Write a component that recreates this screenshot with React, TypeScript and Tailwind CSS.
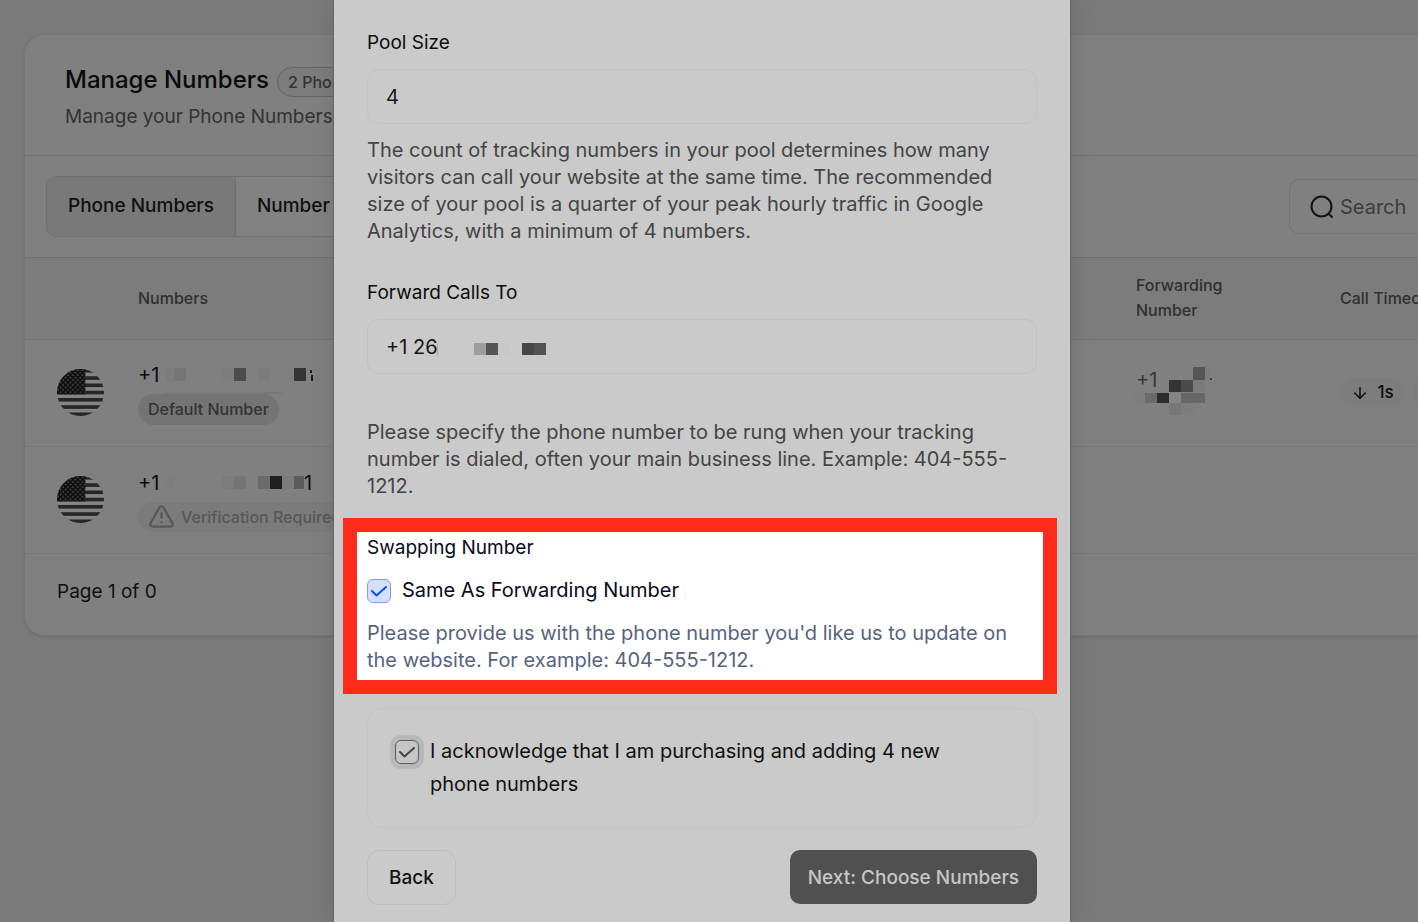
import { useState } from "react";
import { ArrowDown, TriangleAlert } from "lucide-react";

type Cell = [x: number, y: number, w: number, h: number, color: string];

interface MosaicProps {
  width: number;
  height: number;
  cells: Cell[];
  className?: string;
}

const FIRST_NUMBER: Cell[] = [
  [0, 0, 8, 13, "#7c7c7c"],
  [8, 0, 12, 13, "#767676"],
  [56, 0, 12, 13, "#7d7d7d"],
  [68, 0, 12, 13, "#4c4c4c"],
  [92, 0, 12, 13, "#7c7c7c"],
  [128, 0, 12, 13, "#353535"],
  [144, 2, 2, 3, "#1c1c1c"],
  [145, 7, 2, 6, "#1c1c1c"],
  [0, 24, 116, 2, "#797979"],
];

const SECOND_NUMBER: Cell[] = [
  [0, 0, 8, 13, "#7e7e7e"],
  [56, 0, 12, 13, "#7c7c7c"],
  [68, 0, 12, 13, "#757575"],
  [92, 0, 12, 13, "#6b6b6b"],
  [104, 0, 12, 13, "#202020"],
  [116, 0, 12, 13, "#7c7c7c"],
  [128, 0, 10, 13, "#5b5b5b"],
];

const FORWARDING: Cell[] = [
  [60, 0, 12, 13, "#555555"],
  [72, 0, 5, 13, "#7c7c7c"],
  [36, 13, 12, 12, "#343434"],
  [48, 13, 12, 12, "#4b4b4b"],
  [60, 13, 12, 12, "#7b7b7b"],
  [0, 26, 12, 10, "#7e7e7e"],
  [12, 26, 12, 10, "#6a6a6a"],
  [24, 26, 12, 10, "#2d2d2d"],
  [36, 26, 12, 10, "#858585"],
  [48, 26, 12, 10, "#676767"],
  [60, 26, 12, 10, "#676767"],
  [36, 36, 12, 12, "#777777"],
  [48, 36, 12, 12, "#7d7d7d"],
  [77, 11, 2, 2, "#444444"],
];

const FORWARD_CALLS: Cell[] = [
  [0, 0, 1, 12, "#a8a8a8"],
  [37, 0, 12, 12, "#9d9d9d"],
  [49, 0, 12, 12, "#565656"],
  [61, 0, 12, 12, "#c8c8c8"],
  [85, 0, 12, 12, "#474747"],
  [97, 0, 12, 12, "#525252"],
];

function Mosaic({ width, height, cells, className }: MosaicProps) {
  return (
    <svg
      width={width}
      height={height}
      className={className}
      shapeRendering="crispEdges"
      aria-hidden="true"
    >
      {cells.map(([x, y, w, h, color]) => (
        <rect key={`${x}-${y}`} x={x} y={y} width={w} height={h} fill={color} />
      ))}
    </svg>
  );
}

function Flag() {
  return (
    <svg width="47" height="47" viewBox="0 0 48 48" className="block" aria-label="US">
      <defs>
        <clipPath id="flag-circle">
          <circle cx="24" cy="24" r="24" />
        </clipPath>
        <pattern id="flag-stars" width="5" height="5" patternUnits="userSpaceOnUse">
          <rect width="5" height="5" fill="#101010" />
          <circle cx="1.2" cy="1.2" r="0.8" fill="#6a6a6a" />
          <circle cx="3.7" cy="3.7" r="0.8" fill="#6a6a6a" />
        </pattern>
      </defs>
      <g clipPath="url(#flag-circle)">
        <rect width="48" height="48" fill="#858585" />
        {[0, 1, 2, 3, 4, 5, 6].map((i) => (
          <rect key={i} y={i * 7.4} width="48" height="3.7" fill="#262626" />
        ))}
        <rect width="29" height="26" fill="url(#flag-stars)" />
      </g>
    </svg>
  );
}

interface CheckProps {
  id: string;
  checked: boolean;
  onChange: (checked: boolean) => void;
  boxClass: string;
  markClass: string;
}

function Check({ id, checked, onChange, boxClass, markClass }: CheckProps) {
  return (
    <span className="relative block size-6 shrink-0">
      <input
        id={id}
        type="checkbox"
        checked={checked}
        onChange={(e) => onChange(e.target.checked)}
        className={`block size-6 appearance-none rounded-md border ${boxClass}`}
      />
      {checked && (
        <svg
          viewBox="0 0 24 24"
          className={`pointer-events-none absolute inset-0 size-6 ${markClass}`}
          fill="none"
          strokeWidth="2"
          strokeLinecap="round"
          strokeLinejoin="round"
        >
          <path d="M5 12 9.5 16.5 19 8" />
        </svg>
      )}
    </span>
  );
}

function NumbersPage() {
  return (
    <div className="ml-6 rounded-l-[20px] border border-r-0 border-[#767676] bg-[#808080] shadow-sm">
      <div className="border-b border-[#747474] px-10 pt-7 pb-6">
        <div className="flex items-center gap-2">
          <h1 className="text-2xl leading-8 font-medium text-[#0a0a0a]">Manage Numbers</h1>
          <span className="mt-1 rounded-full border border-[#666666] bg-[#7c7c7c] px-2.5 text-base leading-7 font-medium whitespace-nowrap text-[#333333]">
            2 Phone Numbers
          </span>
        </div>
        <p className="mt-1.5 text-[19px] leading-7 text-[#333333]">Manage your Phone Numbers</p>
      </div>

      <div className="flex items-center justify-between border-b border-[#707070] py-5 pl-[21px]">
        <div className="flex overflow-hidden rounded-[10px] border border-[#707070] text-[19px] font-medium text-[#101010]">
          <button className="h-[59px] border-r border-[#707070] bg-[#797979] px-[21px]">
            Phone Numbers
          </button>
          <button className="h-[59px] w-44 bg-[#828282] px-[21px] text-left">Number</button>
        </div>
        <label className="flex h-[55px] w-[129px] items-center gap-1.5 overflow-hidden rounded-l-[10px] border border-r-0 border-[#757575] pl-5">
          <svg
            width="24"
            height="24"
            viewBox="0 0 24 24"
            className="shrink-0"
            fill="none"
            stroke="#141414"
            strokeWidth="2"
            strokeLinecap="round"
          >
            <circle cx="11.5" cy="11.5" r="10" />
            <path d="m19 19 3 3" />
          </svg>
          <input
            type="search"
            placeholder="Search"
            aria-label="Search"
            className="w-40 shrink-0 bg-transparent text-xl outline-none placeholder:text-[#3c3c3c]"
          />
        </label>
      </div>

      <table className="w-full table-fixed text-left">
        <thead>
          <tr className="h-[81px] border-b border-[#737373] bg-[#7c7c7c] text-base leading-[25px] text-[#303030]">
            <th className="w-[89px]" aria-label="Country" />
            <th className="pl-6 font-medium">Numbers</th>
            <th className="w-[204px] pr-12 pl-6 font-medium">Forwarding Number</th>
            <th className="w-[102px] pl-6 font-medium whitespace-nowrap">Call Timeout</th>
          </tr>
        </thead>
        <tbody>
          <tr className="h-[107px] border-b border-[#777777]">
            <td className="pl-8">
              <Flag />
            </td>
            <td className="pl-6">
              <div className="flex h-[33px] items-start gap-1 text-xl leading-7 text-[#0c0c0c]">
                <span className="w-6">+1</span>
                <Mosaic width={150} height={26} cells={FIRST_NUMBER} className="mt-[7px]" />
              </div>
              <span className="inline-block rounded-full bg-[#747474] px-2.5 text-base leading-[31px] font-medium whitespace-nowrap text-[#333333]">
                Default Number
              </span>
            </td>
            <td className="pl-6 align-top">
              <div className="relative pt-[26px] text-xl leading-7 text-[#383838]">
                +1
                <Mosaic
                  width={80}
                  height={48}
                  cells={FORWARDING}
                  className="absolute top-[27px] -left-[3px]"
                />
              </div>
            </td>
            <td className="pl-6">
              <div className="flex gap-2 text-[17px] font-medium text-[#0c0c0c]">
                <span className="flex h-[29px] w-[65px] shrink-0 items-center justify-center gap-2 rounded-full bg-[#7d7d7d]">
                  <ArrowDown size={18} strokeWidth={2} />
                  1s
                </span>
                <span className="h-[29px] w-[65px] shrink-0 rounded-full bg-[#7d7d7d]" />
              </div>
            </td>
          </tr>
          <tr className="h-[107px] border-b border-[#777777]">
            <td className="pl-8">
              <Flag />
            </td>
            <td className="pt-1.5 pl-6">
              <div className="flex h-[33px] items-start text-xl leading-7 text-[#0c0c0c]">
                <span className="mr-1 w-6">+1</span>
                <Mosaic width={138} height={13} cells={SECOND_NUMBER} className="mt-[7px]" />
                <span>1</span>
              </div>
              <span className="inline-flex items-center gap-1.5 rounded-full bg-[#7b7b7b] pr-3 pl-2.5 text-base leading-[30px] font-medium whitespace-nowrap text-[#575757]">
                <TriangleAlert size={27} strokeWidth={2} />
                Verification Required
              </span>
            </td>
            <td />
            <td />
          </tr>
        </tbody>
      </table>

      <div className="px-8 pt-[23px] pb-7 text-[19px] leading-[30px] text-[#101010]">
        Page 1 of 0
      </div>
    </div>
  );
}

function AddNumberDialog() {
  const [poolSize, setPoolSize] = useState("4");
  const [forwardTo, setForwardTo] = useState("+1 26");
  const [sameNumber, setSameNumber] = useState(true);
  const [acknowledged, setAcknowledged] = useState(true);

  return (
    <div
      role="dialog"
      aria-label="Add number pool"
      className="h-full w-[736px] overflow-hidden bg-[#cacaca] px-[33px] pt-[29px] text-xl leading-[27px] text-[#444444] shadow-[0_0_24px_rgba(0,0,0,0.12),0_0_1px_1px_#6e6e6e]"
    >
      <label htmlFor="pool-size" className="block text-[19px] leading-[27px] text-[#0c0c0c]">
        Pool Size
      </label>
      <input
        id="pool-size"
        value={poolSize}
        onChange={(e) => setPoolSize(e.target.value)}
        className="mt-[13px] block h-[55px] w-full rounded-xl border border-[#c3c3c3] bg-transparent px-[18px] text-xl text-[#181818] outline-none"
      />
      <p className="mt-[13px] pr-5">
        The count of tracking numbers in your pool determines how many visitors can call your
        website at the same time. The recommended size of your pool is a quarter of your peak
        hourly traffic in Google Analytics, with a minimum of 4 numbers.
      </p>

      <label
        htmlFor="forward-to"
        className="mt-[34px] block text-[19px] leading-[27px] text-[#0c0c0c]"
      >
        Forward Calls To
      </label>
      <div className="mt-[13px] flex h-[55px] items-center rounded-xl border border-[#c1c1c1] pl-[18px]">
        <input
          id="forward-to"
          value={forwardTo}
          onChange={(e) => setForwardTo(e.target.value)}
          className="w-[51px] bg-transparent text-xl text-[#181818] outline-none"
        />
        <Mosaic width={110} height={12} cells={FORWARD_CALLS} className="mt-1" />
      </div>
      <p className="mt-[45px] pr-5">
        Please specify the phone number to be rung when your tracking number is dialed, often your
        main business line. Example: 404-555-1212.
      </p>

      {/* Highlighted setting */}
      <section className="-mr-5 -ml-6 mt-[18px] border-14 border-[#ff2b1a] bg-white px-2.5 pt-0.5 pb-1.5 text-[#56637f]">
        <h2 className="text-[19px] leading-[27px] text-[#050b1c]">Swapping Number</h2>
        <div className="mt-4 flex items-center gap-[11px]">
          <Check
            id="same-number"
            checked={sameNumber}
            onChange={setSameNumber}
            boxClass="border-[#7d9dfb] bg-[#d3e0fe]"
            markClass="stroke-[#0b50f5]"
          />
          <label htmlFor="same-number" className="text-[#050b1c]">
            Same As Forwarding Number
          </label>
        </div>
        <p className="mt-4">
          Please provide us with the phone number you'd like us to update on the website. For
          example: 404-555-1212.
        </p>
      </section>

      <div className="mt-3.5 flex gap-[11px] rounded-2xl border border-[#c5c5c5] py-[26px] pr-16 pl-[27px] leading-[33px] text-[#101010]">
        <span className="mt-[5px]">
          <Check
            id="acknowledge"
            checked={acknowledged}
            onChange={setAcknowledged}
            boxClass="border-[#5c5c5c] bg-[#c6c6c6] ring-5 ring-[#b9b9b9]"
            markClass="stroke-[#444444]"
          />
        </span>
        <label htmlFor="acknowledge">
          I acknowledge that I am purchasing and adding 4 new phone numbers
        </label>
      </div>

      <div className="mt-[22px] flex justify-between text-[19px] font-medium">
        <button className="h-[55px] rounded-xl border border-[#bdbdbd] px-[21px] text-[#141414]">
          Back
        </button>
        <button className="h-[54px] rounded-[10px] bg-[#505050] px-[18px] text-[#c6c6c6]">
          Next: Choose Numbers
        </button>
      </div>
    </div>
  );
}

export default function App() {
  return (
    <div className="relative h-screen overflow-hidden bg-[#7a7a7a] pt-[34px] font-['Inter',sans-serif]">
      <NumbersPage />
      <div className="absolute inset-0 flex justify-center pr-3.5">
        <AddNumberDialog />
      </div>
    </div>
  );
}
